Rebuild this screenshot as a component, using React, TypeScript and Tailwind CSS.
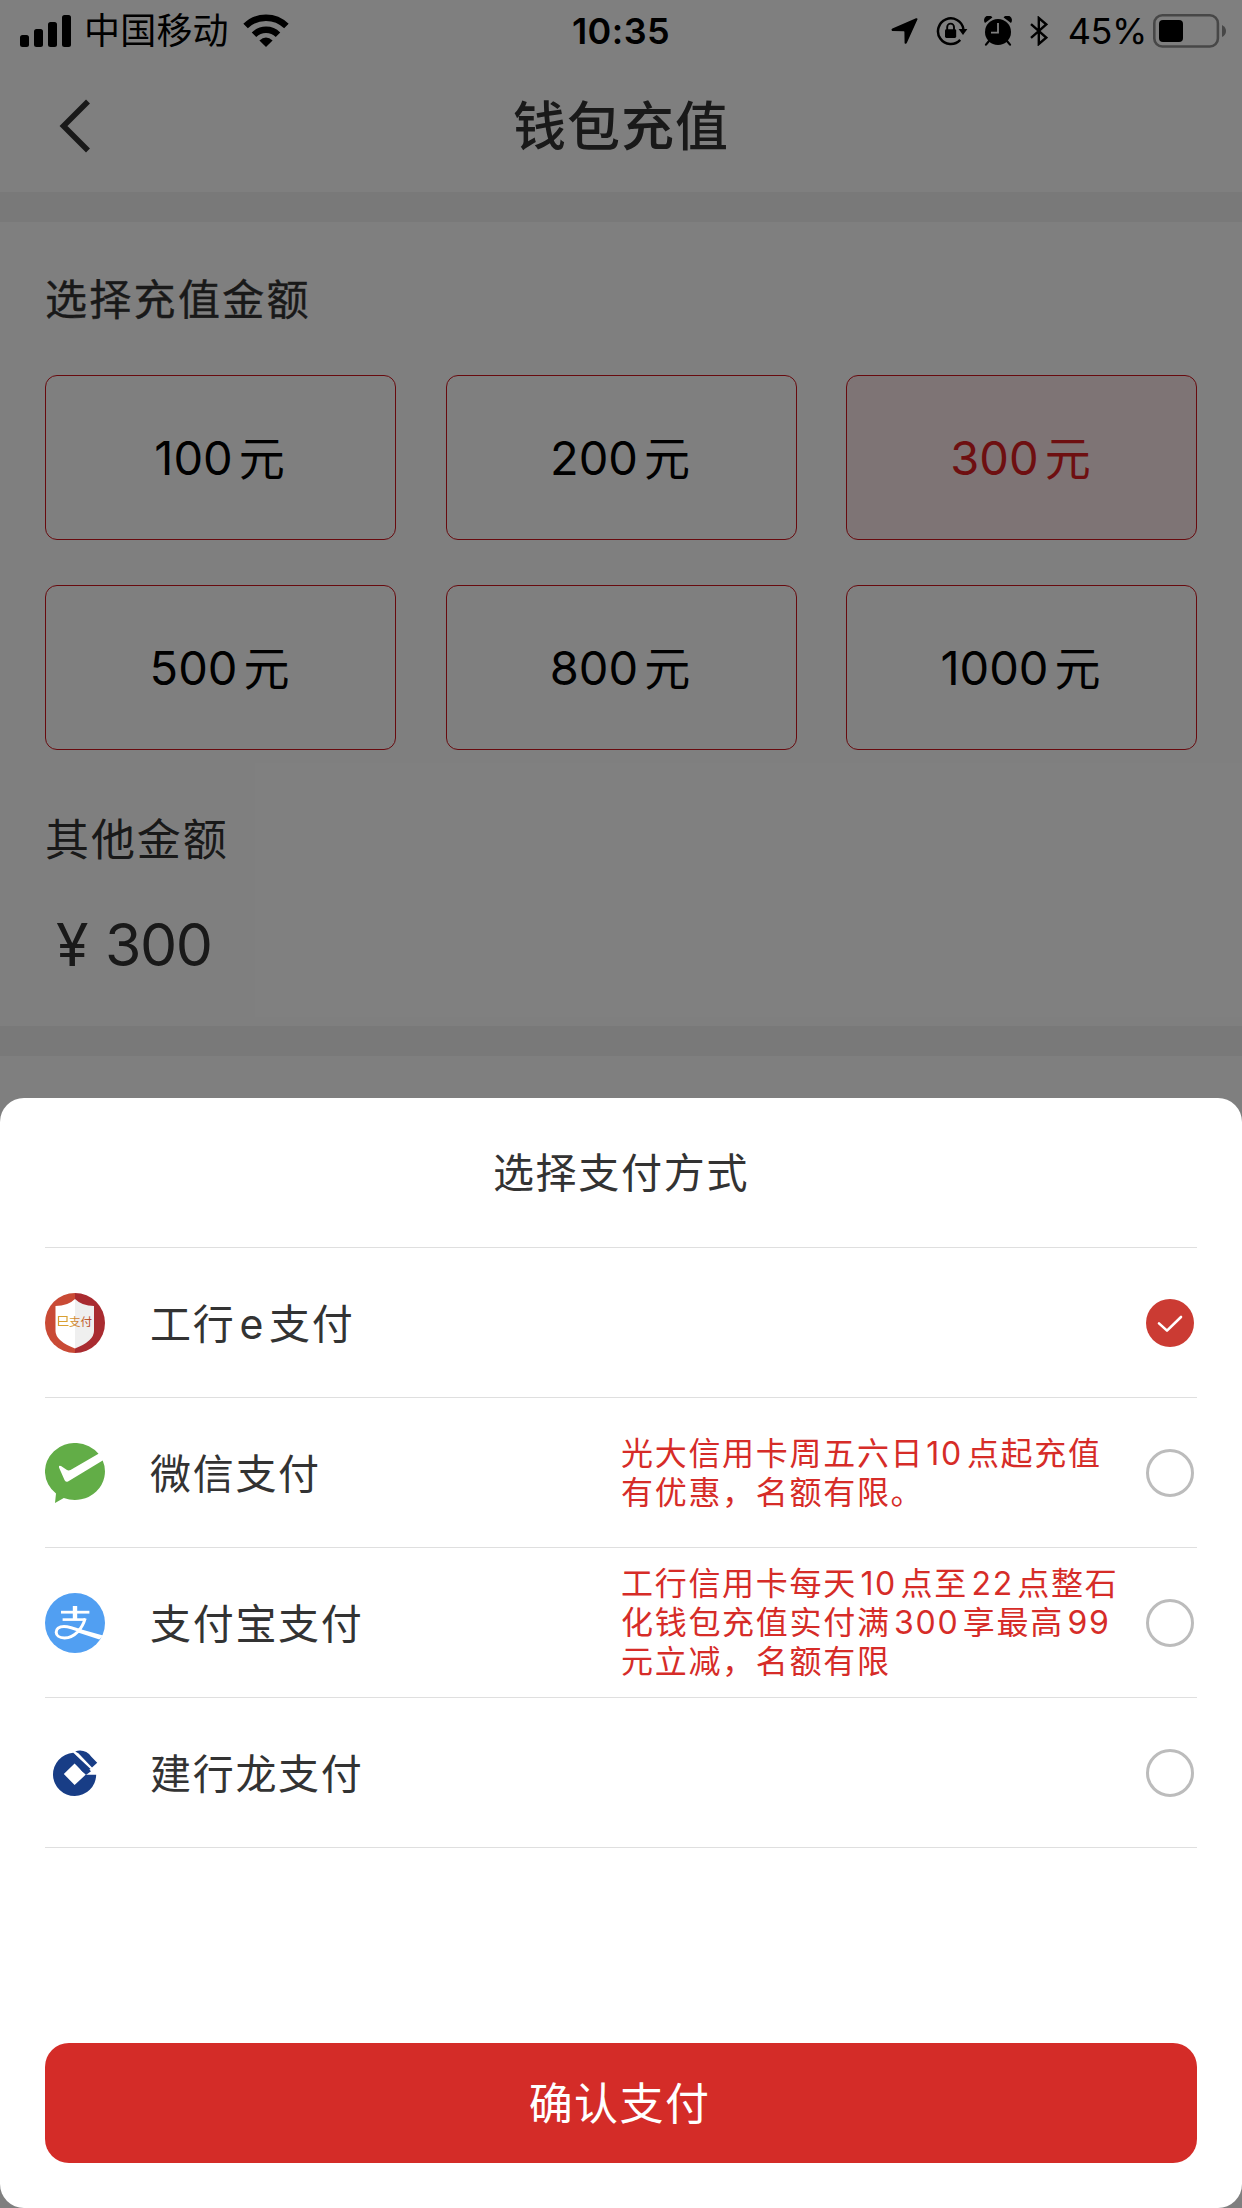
import React from "react";

const amounts = ["100", "200", "300", "500", "800", "1000"];
const selectedAmount = "300";

function SignalIcon() {
  return (
    <svg className="ml-5 h-8 w-[51px]" viewBox="0 0 51 32">
      <rect x="0" y="20" width="9" height="12" rx="2.5" />
      <rect x="14" y="14" width="9" height="18" rx="2.5" />
      <rect x="28" y="7" width="9" height="25" rx="2.5" />
      <rect x="42" y="0" width="9" height="32" rx="2.5" />
    </svg>
  );
}

function WifiIcon() {
  return (
    <svg className="h-[34px] w-[46px]" viewBox="0 0 46 34">
      <path d="M2.6 12.1 A29 29 0 0 1 43.4 12.1" fill="none" stroke="#000" strokeWidth="6.4" />
      <path d="M11 20.7 A17 17 0 0 1 35 20.7" fill="none" stroke="#000" strokeWidth="6.4" />
      <path d="M23 33 L16.4 26.4 Q23 20.8 29.6 26.4 Z" />
    </svg>
  );
}

function LocationIcon() {
  return (
    <svg className="h-7 w-[27px]" viewBox="0 0 27 28">
      <path d="M25 1.3 Q27 0.8 26.3 2.8 L16 25.6 Q15 27.6 13.6 26.2 L13.4 14.8 Q13.4 14.2 12.8 14.2 L1.2 14 Q-0.4 12.8 1.4 11.6 Z" />
    </svg>
  );
}

function RotationLockIcon() {
  return (
    <svg className="ml-[18px] h-[30px] w-8" viewBox="0 0 32 30">
      <path d="M27.4 13 A12.8 12.8 0 1 0 24.2 23.9" fill="none" stroke="#000" strokeWidth="2.5" />
      <path d="M22.6 13 H31.4 L27 19 Z" />
      <rect x="9" y="13.2" width="11.2" height="8.8" rx="1.4" />
      <path d="M11.2 14 V11 A3.4 3.4 0 0 1 18 11 V14" fill="none" stroke="#000" strokeWidth="1.9" />
    </svg>
  );
}

function AlarmIcon() {
  return (
    <svg className="ml-4 h-[30px] w-7" viewBox="0 0 28 30">
      <circle cx="14" cy="16" r="13" />
      <path d="M1 7 A4.4 4.4 0 0 1 8.4 1.4 Z M27 7 A4.4 4.4 0 0 0 19.6 1.4 Z" />
      <path d="M5 25 L2 28.6 M23 25 L26 28.6" stroke="#000" strokeWidth="2.2" strokeLinecap="round" />
      <path d="M14 7 V16.6 H7" fill="none" stroke="#fff" strokeWidth="1.8" />
    </svg>
  );
}

function BluetoothIcon() {
  return (
    <svg className="ml-[18px] h-[30px] w-[18px]" viewBox="0 0 18 30">
      <path
        d="M1 8.2 L16.2 21.6 L8.8 28 V2 L16.2 8.4 L1 21.8"
        fill="none"
        stroke="#000"
        strokeWidth="2.4"
        strokeLinejoin="miter"
      />
    </svg>
  );
}

function BatteryIcon() {
  return (
    <svg className="ml-[6px] h-[34px] w-[74px]" viewBox="0 0 74 34">
      <rect x="1.3" y="1.3" width="63.6" height="31.2" rx="8" fill="none" stroke="#8f8f8f" strokeWidth="2.6" />
      <rect x="6" y="6" width="24" height="22" rx="4" />
      <path d="M69 11 Q73 13 73 17 Q73 21 69 23 Z" fill="#8f8f8f" />
    </svg>
  );
}

function StatusBar() {
  return (
    <div className="grid h-[60px] grid-cols-[1fr_auto_1fr] items-center">
      <div className="flex items-center">
        <SignalIcon />
        <span className="ml-[13px] mr-[14px] pt-px text-[36px] leading-[60px] tracking-[0.2px]">中国移动</span>
        <WifiIcon />
      </div>
      <span className="pt-px text-[36px] font-semibold leading-[60px] tracking-[0.4px]">10:35</span>
      <div className="flex items-center justify-end pr-[15px]">
        <LocationIcon />
        <RotationLockIcon />
        <AlarmIcon />
        <BluetoothIcon />
        <span className="ml-5 pt-px text-[36px] leading-[57px] tracking-[-0.4px]">45%</span>
        <BatteryIcon />
      </div>
    </div>
  );
}

function IcbcIcon() {
  return (
    <svg className="size-[60px]" viewBox="0 0 60 60">
      <defs>
        <linearGradient id="epay" x1="0" x2="1">
          <stop offset="0" stopColor="#d9a032" />
          <stop offset="1" stopColor="#b5402b" />
        </linearGradient>
      </defs>
      <path d="M30 0 A30 30 0 0 0 30 60 Z" fill="#c94a35" />
      <path d="M30 0 A30 30 0 0 1 30 60 Z" fill="#a92b30" />
      <path d="M30 6 Q23 13 10.5 13 V38 Q10.5 48 30 55.5 Z" fill="#fff" />
      <path d="M30 6 Q37 13 49 13 V38 Q49 48 30 55.5 Z" fill="#efefef" />
      <path d="M13.5 28.5 H22 V23.5 H13.5 V32.5 H23.5" fill="none" stroke="#d9a032" strokeWidth="1.2" />
      <text x="24" y="32.6" fontSize="11.5" fill="url(#epay)">支付</text>
    </svg>
  );
}

function WechatIcon() {
  return (
    <svg className="size-[60px]" viewBox="0 0 60 60">
      <path
        d="M53.5 10.8 A30 28.5 0 1 0 11 50.56 L10 60 L18.8 54.9 A30 28.5 0 0 0 57.7 17.6 L23 38.4 Q20.6 39.6 19.5 37 L14 24.6 Q13.5 21.8 16 23 L21.6 26.8 Q23.4 28 25.5 27 Z"
        fill="#62ad47"
      />
    </svg>
  );
}

function AlipayIcon() {
  return (
    <svg className="size-[60px]" viewBox="0 0 60 60">
      <circle cx="30" cy="30" r="30" fill="#519ff2" />
      <g fill="none" stroke="#fff">
        <path d="M16 19.2 H44.4" strokeWidth="2.8" />
        <path d="M30 13 V26" strokeWidth="4.4" />
        <path d="M17.6 26.6 H40.2" strokeWidth="2.6" />
        <path d="M40.2 25.4 C37.5 35 30 45 19.5 45 C8.5 45 8.5 33.4 19 33.4 C25 33.4 31 36 37 38.5" strokeWidth="3" />
      </g>
      <path d="M33 35.6 L58 42.4 L54.4 46.6 L33 39.4 Z" fill="#fff" />
    </svg>
  );
}

function CcbIcon() {
  return (
    <svg className="size-[60px]" viewBox="0 0 60 60">
      <path d="M28.2 9.8 A21.6 21.6 0 1 0 51.2 31.8 H40.6 L29.6 42 L18.8 31 L29.6 20.4 L38.4 29.6 L45.6 26 Z" fill="#183d86" />
      <path d="M28.2 9.8 L46 28.2 L41 32 L36 27 Z" fill="#183d86" />
      <path d="M30.2 8.4 Q40 5.4 46.6 14 L52.2 19.8 L47 24.4 L33.4 10.2 Z" fill="#183d86" />
    </svg>
  );
}

const methods: { name: React.ReactNode; icon: React.ReactNode; note?: React.ReactNode; checked?: boolean }[] = [
  {
    name: (
      <>
        工行<span className="mx-1">e</span>支付
      </>
    ),
    icon: <IcbcIcon />,
    checked: true,
  },
  {
    name: "微信支付",
    icon: <WechatIcon />,
    note: (
      <>
        光大信用卡周五六日<span className="ml-[2px] mr-1">10</span>点起充值
        <br />
        有优惠，名额有限。
      </>
    ),
  },
  {
    name: "支付宝支付",
    icon: <AlipayIcon />,
    note: (
      <>
        工行信用卡每天<span className="mx-[3.5px]">10</span>点至<span className="mx-[3.5px]">22</span>点整石
        <br />
        化钱包充值实付满<span className="mx-[3.5px]">300</span>享最高<span className="mx-[3.5px]">99</span>
        <br />
        元立减，名额有限
      </>
    ),
  },
  { name: "建行龙支付", icon: <CcbIcon /> },
];

function Radio({ checked }: { checked?: boolean }) {
  if (!checked) return <span className="size-12 shrink-0 rounded-full border-[3px] border-[#bcbcbc]" />;
  return (
    <span className="flex size-12 shrink-0 items-center justify-center rounded-full bg-[#cb3b33]">
      <svg className="size-12" viewBox="0 0 48 48">
        <path d="M13 24.4 L21 31.6 L35 18" fill="none" stroke="#fff" strokeWidth="2.6" strokeLinecap="round" strokeLinejoin="round" />
      </svg>
    </span>
  );
}

function PaymentSheet() {
  return (
    <section className="absolute inset-x-0 bottom-0 flex h-[1110px] flex-col rounded-[24px] bg-white px-[45px] text-[#333]">
      <h2 className="flex h-[150px] items-center justify-center border-b border-[#dfdfdf] pt-[3px] text-[41px] tracking-[1.7px]">
        选择支付方式
      </h2>
      {methods.map((m, i) => (
        <div key={i} className="flex h-[150px] items-center border-b border-[#dfdfdf] pr-[3px]">
          {m.icon}
          <span className="ml-[45px] w-[471px] pt-1 text-[41px] tracking-[1.7px]">{m.name}</span>
          <p className="flex-1 whitespace-nowrap text-[32px] leading-[39px] tracking-[1.7px] text-[#d62c28]">{m.note}</p>
          <Radio checked={m.checked} />
        </div>
      ))}
      <button className="mb-[45px] mt-auto h-[120px] rounded-[24px] bg-[#d42c28] pr-[3px] pt-[2px] text-[44px] tracking-[1.4px] text-white">
        确认支付
      </button>
    </section>
  );
}

export default function App() {
  return (
    <main
      lang="zh-CN"
      className="relative h-[2208px] w-[1242px] overflow-hidden bg-white text-black font-[Inter,'Noto_Sans_CJK_SC',sans-serif]"
    >
      <StatusBar />
      <header className="grid h-[132px] grid-cols-[1fr_auto_1fr] items-center text-[#333]">
        <svg className="ml-[58px] h-[60px] w-9" viewBox="0 0 36 60">
          <path d="M30 5.5 L5.5 30 L30 54.5" fill="none" stroke="currentColor" strokeWidth="5.6" />
        </svg>
        <h1 className="pt-[2px] text-[53px] font-medium leading-[130px] tracking-[1px]">钱包充值</h1>
      </header>
      <div className="h-[30px] bg-[#f2f2f2]" />
      <section className="flex h-[804px] flex-col px-[45px]">
        <h2 className="mt-[46px] h-[64px] text-[42px] leading-[64px] tracking-[2.3px] text-[#333] [-webkit-text-stroke:0.4px_#333]">
          选择充值金额
        </h2>
        <div className="mt-[43px] grid grid-cols-3 gap-x-[49.5px] gap-y-[45px]">
          {amounts.map((a) => (
            <div
              key={a}
              className={
                a === selectedAmount
                  ? "flex h-[165px] items-center justify-center rounded-[12px] border border-[#d0141c] bg-[#fce8ea] pr-[2px] pt-[2px] text-[47px] text-[#dc1e22]"
                  : "flex h-[165px] items-center justify-center rounded-[12px] border border-[#d0141c] pr-[2px] pt-[2px] text-[47px]"
              }
            >
              {a}
              <span className="ml-[6px] text-[46px]">元</span>
            </div>
          ))}
        </div>
        <h2 className="mt-[58px] h-[64px] text-[44px] leading-[64px] tracking-[1.9px] text-[#333]">其他金额</h2>
        <div className="mt-[33px] flex h-[80px] items-center text-[59px] text-[#333]">
          <span className="ml-[11px] w-[49px] text-[59px] tracking-[-1px]">¥</span>
          <span className="tracking-[-1.5px]">300</span>
        </div>
      </section>
      <div className="h-[30px] bg-[#f2f2f2]" />
      <div className="absolute inset-0 bg-black/50" />
      <PaymentSheet />
    </main>
  );
}
